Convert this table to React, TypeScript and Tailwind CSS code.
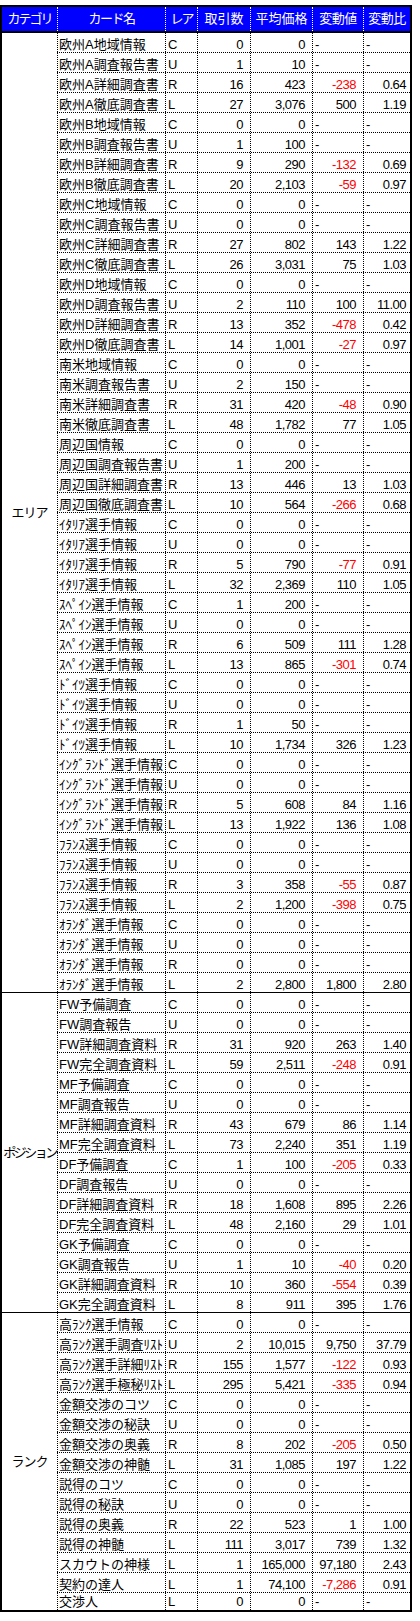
import React from "react";

type Row = [string, string, string, string, string | null, string | null];

const area: Row[] = [
  ["欧州A地域情報", "C", "0", "0", null, null],
  ["欧州A調査報告書", "U", "1", "10", null, null],
  ["欧州A詳細調査書", "R", "16", "423", "-238", "0.64"],
  ["欧州A徹底調査書", "L", "27", "3,076", "500", "1.19"],
  ["欧州B地域情報", "C", "0", "0", null, null],
  ["欧州B調査報告書", "U", "1", "100", null, null],
  ["欧州B詳細調査書", "R", "9", "290", "-132", "0.69"],
  ["欧州B徹底調査書", "L", "20", "2,103", "-59", "0.97"],
  ["欧州C地域情報", "C", "0", "0", null, null],
  ["欧州C調査報告書", "U", "0", "0", null, null],
  ["欧州C詳細調査書", "R", "27", "802", "143", "1.22"],
  ["欧州C徹底調査書", "L", "26", "3,031", "75", "1.03"],
  ["欧州D地域情報", "C", "0", "0", null, null],
  ["欧州D調査報告書", "U", "2", "110", "100", "11.00"],
  ["欧州D詳細調査書", "R", "13", "352", "-478", "0.42"],
  ["欧州D徹底調査書", "L", "14", "1,001", "-27", "0.97"],
  ["南米地域情報", "C", "0", "0", null, null],
  ["南米調査報告書", "U", "2", "150", null, null],
  ["南米詳細調査書", "R", "31", "420", "-48", "0.90"],
  ["南米徹底調査書", "L", "48", "1,782", "77", "1.05"],
  ["周辺国情報", "C", "0", "0", null, null],
  ["周辺国調査報告書", "U", "1", "200", null, null],
  ["周辺国詳細調査書", "R", "13", "446", "13", "1.03"],
  ["周辺国徹底調査書", "L", "10", "564", "-266", "0.68"],
  ["ｲﾀﾘｱ選手情報", "C", "0", "0", null, null],
  ["ｲﾀﾘｱ選手情報", "U", "0", "0", null, null],
  ["ｲﾀﾘｱ選手情報", "R", "5", "790", "-77", "0.91"],
  ["ｲﾀﾘｱ選手情報", "L", "32", "2,369", "110", "1.05"],
  ["ｽﾍﾟｲﾝ選手情報", "C", "1", "200", null, null],
  ["ｽﾍﾟｲﾝ選手情報", "U", "0", "0", null, null],
  ["ｽﾍﾟｲﾝ選手情報", "R", "6", "509", "111", "1.28"],
  ["ｽﾍﾟｲﾝ選手情報", "L", "13", "865", "-301", "0.74"],
  ["ﾄﾞｲﾂ選手情報", "C", "0", "0", null, null],
  ["ﾄﾞｲﾂ選手情報", "U", "0", "0", null, null],
  ["ﾄﾞｲﾂ選手情報", "R", "1", "50", null, null],
  ["ﾄﾞｲﾂ選手情報", "L", "10", "1,734", "326", "1.23"],
  ["ｲﾝｸﾞﾗﾝﾄﾞ選手情報", "C", "0", "0", null, null],
  ["ｲﾝｸﾞﾗﾝﾄﾞ選手情報", "U", "0", "0", null, null],
  ["ｲﾝｸﾞﾗﾝﾄﾞ選手情報", "R", "5", "608", "84", "1.16"],
  ["ｲﾝｸﾞﾗﾝﾄﾞ選手情報", "L", "13", "1,922", "136", "1.08"],
  ["ﾌﾗﾝｽ選手情報", "C", "0", "0", null, null],
  ["ﾌﾗﾝｽ選手情報", "U", "0", "0", null, null],
  ["ﾌﾗﾝｽ選手情報", "R", "3", "358", "-55", "0.87"],
  ["ﾌﾗﾝｽ選手情報", "L", "2", "1,200", "-398", "0.75"],
  ["ｵﾗﾝﾀﾞ選手情報", "C", "0", "0", null, null],
  ["ｵﾗﾝﾀﾞ選手情報", "U", "0", "0", null, null],
  ["ｵﾗﾝﾀﾞ選手情報", "R", "0", "0", null, null],
  ["ｵﾗﾝﾀﾞ選手情報", "L", "2", "2,800", "1,800", "2.80"],
];

const position: Row[] = [
  ["FW予備調査", "C", "0", "0", null, null],
  ["FW調査報告", "U", "0", "0", null, null],
  ["FW詳細調査資料", "R", "31", "920", "263", "1.40"],
  ["FW完全調査資料", "L", "59", "2,511", "-248", "0.91"],
  ["MF予備調査", "C", "0", "0", null, null],
  ["MF調査報告", "U", "0", "0", null, null],
  ["MF詳細調査資料", "R", "43", "679", "86", "1.14"],
  ["MF完全調査資料", "L", "73", "2,240", "351", "1.19"],
  ["DF予備調査", "C", "1", "100", "-205", "0.33"],
  ["DF調査報告", "U", "0", "0", null, null],
  ["DF詳細調査資料", "R", "18", "1,608", "895", "2.26"],
  ["DF完全調査資料", "L", "48", "2,160", "29", "1.01"],
  ["GK予備調査", "C", "0", "0", null, null],
  ["GK調査報告", "U", "1", "10", "-40", "0.20"],
  ["GK詳細調査資料", "R", "10", "360", "-554", "0.39"],
  ["GK完全調査資料", "L", "8", "911", "395", "1.76"],
];

const rank: Row[] = [
  ["高ﾗﾝｸ選手情報", "C", "0", "0", null, null],
  ["高ﾗﾝｸ選手調査ﾘｽﾄ", "U", "2", "10,015", "9,750", "37.79"],
  ["高ﾗﾝｸ選手詳細ﾘｽﾄ", "R", "155", "1,577", "-122", "0.93"],
  ["高ﾗﾝｸ選手極秘ﾘｽﾄ", "L", "295", "5,421", "-335", "0.94"],
  ["金額交渉のコツ", "C", "0", "0", null, null],
  ["金額交渉の秘訣", "U", "0", "0", null, null],
  ["金額交渉の奥義", "R", "8", "202", "-205", "0.50"],
  ["金額交渉の神髄", "L", "31", "1,085", "197", "1.22"],
  ["説得のコツ", "C", "0", "0", null, null],
  ["説得の秘訣", "U", "0", "0", null, null],
  ["説得の奥義", "R", "22", "523", "1", "1.00"],
  ["説得の神髄", "L", "111", "3,017", "739", "1.32"],
  ["スカウトの神様", "L", "1", "165,000", "97,180", "2.43"],
  ["契約の達人", "L", "1", "74,100", "-7,286", "0.91"],
  ["交渉人", "L", "0", "0", null, null],
];

const num = "text-right tracking-[-0.5px]";

function DataRow({ r, last, short }: { r: Row; last: boolean; short: boolean }) {
  const [name, rar, cnt, avg, chg, ratio] = r;
  const isShort = last && short;
  const cellBase = `border-l border-dotted border-black ${
    isShort ? "pt-[1px] leading-[16px]" : "pt-[2px] leading-[19px]"
  } whitespace-nowrap`;
  const rowCls = last
    ? short
      ? "flex h-[17px]"
      : "flex h-[19px]"
    : "flex h-[20px] border-b border-dotted border-black";
  const neg = chg !== null && chg.startsWith("-");
  return (
    <div className={rowCls}>
      <div className={`${cellBase} w-[108px] pl-[1px] overflow-hidden`}>{name}</div>
      <div className={`${cellBase} w-[32px] pl-[2px]`}>{rar}</div>
      <div className={`${cellBase} ${num} w-[53px] pr-[7px]`}>{cnt}</div>
      <div className={`${cellBase} ${num} w-[62px] pr-[7px]`}>{avg}</div>
      {chg === null ? (
        <div className={`${cellBase} w-[51px] pl-[2px]`}>-</div>
      ) : (
        <div className={`${cellBase} ${num} w-[51px] pr-[7px] ${neg ? "text-[#ff0000]" : ""}`}>{chg}</div>
      )}
      {ratio === null ? (
        <div className={`${cellBase} w-[47px] pl-[2px]`}>-</div>
      ) : (
        <div className={`${cellBase} ${num} w-[47px] pr-[4px]`}>{ratio}</div>
      )}
    </div>
  );
}

function Group({
  label,
  rows,
  final,
  labelCls,
}: {
  label: string;
  rows: Row[];
  final: boolean;
  labelCls?: string;
}) {
  return (
    <div className={final ? "flex" : "flex border-b border-black"}>
      <div className="w-[55px] flex items-center justify-center">
        <span className={`whitespace-nowrap leading-[19px] ${labelCls ?? ""}`}>{label}</span>
      </div>
      <div className="flex flex-col">
        {rows.map((r, i) => (
          <DataRow key={i} r={r} last={i === rows.length - 1} short={final} />
        ))}
      </div>
    </div>
  );
}

export default function App() {
  const hd = "border-l border-dotted border-white flex items-center justify-center";
  return (
    <div className="w-[420px] h-[1621px] bg-white pt-[5px] text-black text-[13px] font-[family-name:'Liberation_Sans','Noto_Sans_CJK_JP',sans-serif]">
      <div className="w-[412px] border-2 border-black">
        <div className="flex h-[26px] bg-[#0000ff] text-white border-b-2 border-black leading-[24px]">
          <div className="w-[55px] flex items-center justify-center tracking-[-2px]">カテゴリ</div>
          <div className={`${hd} w-[108px] tracking-[-1.5px]`}>カード名</div>
          <div className={`${hd} w-[32px] tracking-[-2px]`}>レア</div>
          <div className={`${hd} w-[53px]`}>取引数</div>
          <div className={`${hd} w-[62px]`}>平均価格</div>
          <div className={`${hd} w-[51px] tracking-[-0.5px]`}>変動値</div>
          <div className={`${hd} w-[47px] tracking-[-0.5px]`}>変動比</div>
        </div>
        <Group label="エリア" rows={area} final={false} labelCls="tracking-[-1px]" />
        <Group label="ポジション" rows={position} final={false} labelCls="tracking-[-2.5px]" />
        <Group label="ランク" rows={rank} final={true} labelCls="tracking-[-1px]" />
      </div>
    </div>
  );
}
